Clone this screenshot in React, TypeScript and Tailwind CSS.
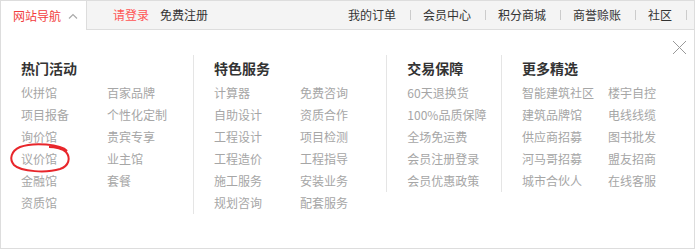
import React from "react";

const topLinks = ["我的订单", "会员中心", "积分商城", "商誉赊账", "社区"];

const columns = [
  {
    title: "热门活动",
    width: "w-[192px]",
    first: true,
    cols: 2,
    items: ["伙拼馆", "百家品牌", "项目报备", "个性化定制", "询价馆", "贵宾专享", "议价馆", "业主馆", "金融馆", "套餐", "资质馆"],
  },
  {
    title: "特色服务",
    width: "w-[194px]",
    cols: 2,
    items: ["计算器", "免费咨询", "自助设计", "资质合作", "工程设计", "项目检测", "工程造价", "工程指导", "施工服务", "安装业务", "规划咨询", "配套服务"],
  },
  {
    title: "交易保障",
    width: "w-[115px]",
    cols: 1,
    items: ["60天退换货", "100%品质保障", "全场免运费", "会员注册登录", "会员优惠政策"],
  },
  {
    title: "更多精选",
    width: "flex-1",
    cols: 2,
    items: ["智能建筑社区", "楼宇自控", "建筑品牌馆", "电线线缆", "供应商招募", "图书批发", "河马哥招募", "盟友招商", "城市合伙人", "在线客服"],
  },
];

export default function App() {
  return (
    <div className="w-[695px] h-[249px] bg-white border-x border-b border-[#ddd] text-[12px] font-['Noto_Sans_CJK_SC','Noto_Sans',sans-serif] flex flex-col">
      {/* top bar */}
      <div className="flex h-[30px] shrink-0">
        <div className="w-[86px] bg-white border-t border-r border-[#ddd] flex items-center pl-[12px]">
          <span className="text-[#f23d3d] leading-none">网站导航</span>
          <svg className="ml-[7px]" width="10" height="6" viewBox="0 0 10 6">
            <polyline points="1,5.5 5,1.5 9,5.5" fill="none" stroke="#aaa" strokeWidth="1.2" />
          </svg>
        </div>
        <div className="flex-1 bg-[#f4f4f4] border-t border-b border-[#ddd] flex items-center pl-[26px] pr-[7px]">
          <span className="text-[#f55]">请登录</span>
          <span className="ml-[11px] text-[#333]">免费注册</span>
          <div className="ml-auto flex items-center text-[#333]">
            {topLinks.map((t) => (
              <React.Fragment key={t}>
                <span>{t}</span>
                <span className="ml-[14px] mr-[12px] last:mr-0 w-px h-[10px] bg-[#ccc]" />
              </React.Fragment>
            ))}
          </div>
        </div>
      </div>

      {/* panel */}
      <div className="relative flex-1">
        <svg className="absolute left-[671px] top-[10px]" width="15" height="15" viewBox="0 0 15 15">
          <path d="M1 1 L14 14 M14 1 L1 14" stroke="#999" strokeWidth="1" fill="none" />
        </svg>
        <svg className="absolute left-[8px] top-[112px]" width="62" height="32" viewBox="0 0 62 32">
          <path
            d="M58 9 C52 2 24 0 11 5 C2 9 0 17 5 23 C12 30 38 31 51 27 C60 24 62 16 57 10 C54 7 46 5 40 5"
            fill="none"
            stroke="#e8262b"
            strokeWidth="2"
          />
        </svg>

        <div className="flex items-start pt-[25px]">
          {columns.map((c) => (
            <div
              key={c.title}
              className={`${c.width} pl-[20px] ${c.first ? "" : "border-l border-[#e5e5e5]"}`}
            >
              <div className="h-[27px] leading-[27px] text-[14px] font-bold text-[#333]">{c.title}</div>
              <div className={c.cols === 2 ? "grid grid-cols-[86px_86px]" : "grid grid-cols-1"}>
                {c.items.map((it) => (
                  <div key={it} className="h-[22px] leading-[22px] text-[#a6a6a6] whitespace-nowrap">
                    {it}
                  </div>
                ))}
              </div>
            </div>
          ))}
        </div>
      </div>
    </div>
  );
}
